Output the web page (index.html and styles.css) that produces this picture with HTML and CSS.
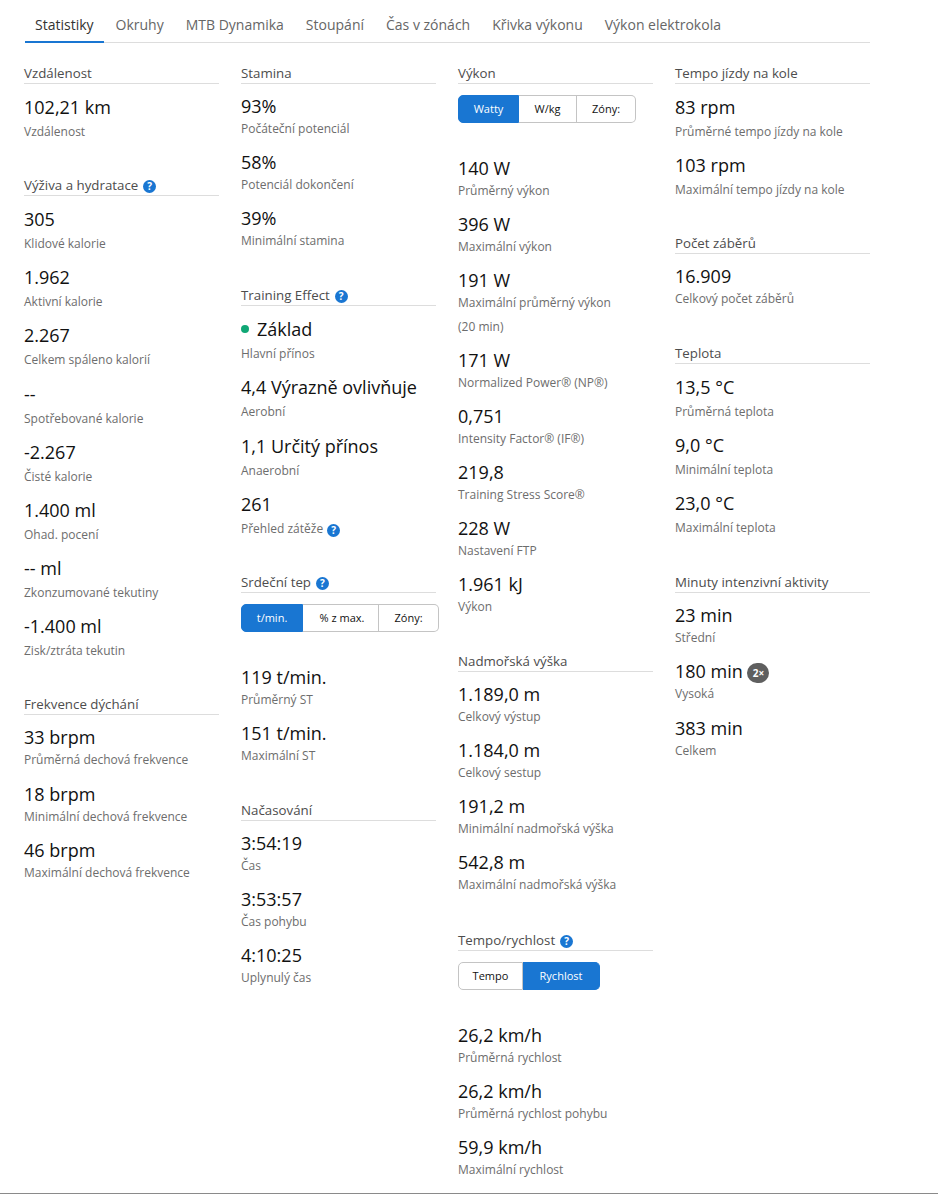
FILE: index.html
```html
<!DOCTYPE html>
<html lang="cs">
<head>
<meta charset="utf-8">
<title>Statistiky</title>
<link rel="stylesheet" href="styles.css">
</head>
<body>
<div class="page">
  <nav class="tabs">
    <a class="tab active">Statistiky</a>
    <a class="tab">Okruhy</a>
    <a class="tab">MTB Dynamika</a>
    <a class="tab">Stoupání</a>
    <a class="tab">Čas v zónách</a>
    <a class="tab">Křivka výkonu</a>
    <a class="tab">Výkon elektrokola</a>
  </nav>
  <main class="grid">
    <div class="col">
      <section class="sec roomy">
        <h3 class="title">Vzdálenost</h3>
        <div class="stat"><div class="val">102,21 km</div><div class="lab">Vzdálenost</div></div>
      </section>
      <section class="sec roomy drift">
        <h3 class="title">Výživa a hydratace <span class="help">?</span></h3>
        <div class="stat"><div class="val">305</div><div class="lab">Klidové kalorie</div></div>
        <div class="stat"><div class="val">1.962</div><div class="lab">Aktivní kalorie</div></div>
        <div class="stat"><div class="val">2.267</div><div class="lab">Celkem spáleno kalorií</div></div>
        <div class="stat"><div class="val">--</div><div class="lab">Spotřebované kalorie</div></div>
        <div class="stat"><div class="val">-2.267</div><div class="lab">Čisté kalorie</div></div>
        <div class="stat"><div class="val">1.400 ml</div><div class="lab">Ohad. pocení</div></div>
        <div class="stat"><div class="val">-- ml</div><div class="lab">Zkonzumované tekutiny</div></div>
        <div class="stat"><div class="val">-1.400 ml</div><div class="lab">Zisk/ztráta tekutin</div></div>
      </section>
      <section class="sec mid">
        <h3 class="title">Frekvence dýchání</h3>
        <div class="stat"><div class="val">33 brpm</div><div class="lab">Průměrná dechová frekvence</div></div>
        <div class="stat"><div class="val">18 brpm</div><div class="lab">Minimální dechová frekvence</div></div>
        <div class="stat"><div class="val">46 brpm</div><div class="lab">Maximální dechová frekvence</div></div>
      </section>
    </div>
    <div class="col">
      <section class="sec">
        <h3 class="title">Stamina</h3>
        <div class="stat"><div class="val">93%</div><div class="lab">Počáteční potenciál</div></div>
        <div class="stat"><div class="val">58%</div><div class="lab">Potenciál dokončení</div></div>
        <div class="stat"><div class="val">39%</div><div class="lab">Minimální stamina</div></div>
      </section>
      <section class="sec roomy drift">
        <h3 class="title">Training Effect <span class="help">?</span></h3>
        <div class="stat"><div class="val"><span class="dot"></span>Základ</div><div class="lab">Hlavní přínos</div></div>
        <div class="stat"><div class="val">4,4 Výrazně ovlivňuje</div><div class="lab">Aerobní</div></div>
        <div class="stat"><div class="val">1,1 Určitý přínos</div><div class="lab">Anaerobní</div></div>
        <div class="stat"><div class="val">261</div><div class="lab">Přehled zátěže <span class="help">?</span></div></div>
      </section>
      <section class="sec mid">
        <h3 class="title">Srdeční tep <span class="help">?</span></h3>
        <div class="seg">
          <button class="btn on w62">t/min.</button>
          <button class="btn w76">% z max.</button>
          <button class="btn w60">Zóny:</button>
        </div>
        <div class="stat"><div class="val">119 t/min.</div><div class="lab">Průměrný ST</div></div>
        <div class="stat"><div class="val">151 t/min.</div><div class="lab">Maximální ST</div></div>
      </section>
      <section class="sec">
        <h3 class="title">Načasování</h3>
        <div class="stat"><div class="val">3:54:19</div><div class="lab">Čas</div></div>
        <div class="stat"><div class="val">3:53:57</div><div class="lab">Čas pohybu</div></div>
        <div class="stat"><div class="val">4:10:25</div><div class="lab">Uplynulý čas</div></div>
      </section>
    </div>
    <div class="col">
      <section class="sec">
        <h3 class="title">Výkon</h3>
        <div class="seg">
          <button class="btn on w61">Watty</button>
          <button class="btn w58">W/kg</button>
          <button class="btn w59">Zóny:</button>
        </div>
        <div class="stat"><div class="val">140 W</div><div class="lab">Průměrný výkon</div></div>
        <div class="stat"><div class="val">396 W</div><div class="lab">Maximální výkon</div></div>
        <div class="stat"><div class="val">191 W</div><div class="lab">Maximální průměrný výkon<br>(20 min)</div></div>
        <div class="stat"><div class="val">171 W</div><div class="lab">Normalized Power® (NP®)</div></div>
        <div class="stat"><div class="val">0,751</div><div class="lab">Intensity Factor® (IF®)</div></div>
        <div class="stat"><div class="val">219,8</div><div class="lab">Training Stress Score®</div></div>
        <div class="stat"><div class="val">228 W</div><div class="lab">Nastavení FTP</div></div>
        <div class="stat"><div class="val">1.961 kJ</div><div class="lab">Výkon</div></div>
      </section>
      <section class="sec">
        <h3 class="title">Nadmořská výška</h3>
        <div class="stat"><div class="val">1.189,0 m</div><div class="lab">Celkový výstup</div></div>
        <div class="stat"><div class="val">1.184,0 m</div><div class="lab">Celkový sestup</div></div>
        <div class="stat"><div class="val">191,2 m</div><div class="lab">Minimální nadmořská výška</div></div>
        <div class="stat"><div class="val">542,8 m</div><div class="lab">Maximální nadmořská výška</div></div>
      </section>
      <section class="sec">
        <h3 class="title">Tempo/rychlost <span class="help">?</span></h3>
        <div class="seg">
          <button class="btn w65">Tempo</button>
          <button class="btn on w77">Rychlost</button>
        </div>
        <div class="stat"><div class="val">26,2 km/h</div><div class="lab">Průměrná rychlost</div></div>
        <div class="stat"><div class="val">26,2 km/h</div><div class="lab">Průměrná rychlost pohybu</div></div>
        <div class="stat"><div class="val">59,9 km/h</div><div class="lab">Maximální rychlost</div></div>
      </section>
    </div>
    <div class="col">
      <section class="sec roomy">
        <h3 class="title">Tempo jízdy na kole</h3>
        <div class="stat"><div class="val">83 rpm</div><div class="lab">Průměrné tempo jízdy na kole</div></div>
        <div class="stat"><div class="val">103 rpm</div><div class="lab">Maximální tempo jízdy na kole</div></div>
      </section>
      <section class="sec">
        <h3 class="title">Počet záběrů</h3>
        <div class="stat"><div class="val">16.909</div><div class="lab">Celkový počet záběrů</div></div>
      </section>
      <section class="sec roomy">
        <h3 class="title">Teplota</h3>
        <div class="stat"><div class="val">13,5 °C</div><div class="lab">Průměrná teplota</div></div>
        <div class="stat"><div class="val">9,0 °C</div><div class="lab">Minimální teplota</div></div>
        <div class="stat"><div class="val">23,0 °C</div><div class="lab">Maximální teplota</div></div>
      </section>
      <section class="sec mid">
        <h3 class="title">Minuty intenzivní aktivity</h3>
        <div class="stat"><div class="val">23 min</div><div class="lab">Střední</div></div>
        <div class="stat"><div class="val">180 min <span class="badge">2×</span></div><div class="lab">Vysoká</div></div>
        <div class="stat"><div class="val">383 min</div><div class="lab">Celkem</div></div>
      </section>
    </div>
  </main>
</div>
</body>
</html>
```
FILE: styles.css
```css
* { box-sizing: border-box; }
html, body { margin: 0; padding: 0; background: #fff; }
body { font-family: "Open Sans", "Liberation Sans", sans-serif; color: #111; }
.page { height: 1194px; padding: 0 68px 0 24px; border-bottom: 1px solid #8a8a8a; overflow: hidden; }
.tabs { display: flex; margin-left: 1px; height: 43px; padding-top: 15px; border-bottom: 1px solid #ddd; }
.tab { height: 28px; padding: 0 11px; font-size: 14px; line-height: 20px; color: #666; }
.active { padding: 0 10px; margin-right: 1px; color: #333; border-bottom: 2px solid #1976d2; }
.grid { display: grid; grid-template-columns: repeat(4, 195px); column-gap: 22px; padding-top: 20px; }
.sec { margin-bottom: 32.25px; }
.sec.roomy { margin-bottom: 31.2px; }
.sec.mid { margin-bottom: 31.5px; }
.title { margin: 0 0 13px; height: 21px; font-size: 13.3px; font-weight: 400; line-height: 20px; color: #4d4d4d; border-bottom: 1px solid #ddd; white-space: nowrap; }
.stat { margin-bottom: 12px; }
.val { margin-bottom: 1px; font-size: 18px; line-height: 19px; color: #111; white-space: nowrap; }
.roomy .val { margin-bottom: 2px; line-height: 21px; }
.roomy .stat { margin-bottom: 11px; }
.drift .stat { margin-bottom: 11.15px; }
.mid .stat { margin-bottom: 12.5px; }
.lab { font-size: 12px; line-height: 24px; color: #6d6d6d; }
.help { display: inline-block; width: 13px; height: 13px; margin-left: 1.5px; border-radius: 50%; background: #1976d2; color: #fff; font-size: 10px; font-weight: 700; line-height: 13px; text-align: center; vertical-align: 0; }
.lab .help { margin-left: 1px; vertical-align: -1px; }
.dot { display: inline-block; width: 8px; height: 8px; margin-right: 8px; border-radius: 50%; background: #10a775; vertical-align: 3px; }
.badge { display: inline-block; width: 22px; height: 20px; margin: -4px 0; border-radius: 10px; background: #5f5f5f; color: #fff; font-size: 10px; font-weight: 700; line-height: 20px; text-align: center; vertical-align: 1px; }
.seg { display: flex; margin: -2px 0 36px; }
.btn { flex: none; height: 28px; padding: 0; font: 400 11px/26px "Open Sans", "Liberation Sans", sans-serif; color: #111; background: #fff; border: 1px solid #c4c4c4; border-left-width: 0; }
.btn:first-child { border-left-width: 1px; border-radius: 5px 0 0 5px; }
.btn:last-child { border-radius: 0 5px 5px 0; }
.btn.on { color: #fff; background: #1976d2; border-color: #1976d2; }
.w58 { width: 58px; }
.w59 { width: 59px; }
.w60 { width: 60px; }
.w61 { width: 61px; }
.w62 { width: 62px; }
.w65 { width: 65px; }
.w76 { width: 76px; padding-left: 3px; }
.w77 { width: 77px; }
```
